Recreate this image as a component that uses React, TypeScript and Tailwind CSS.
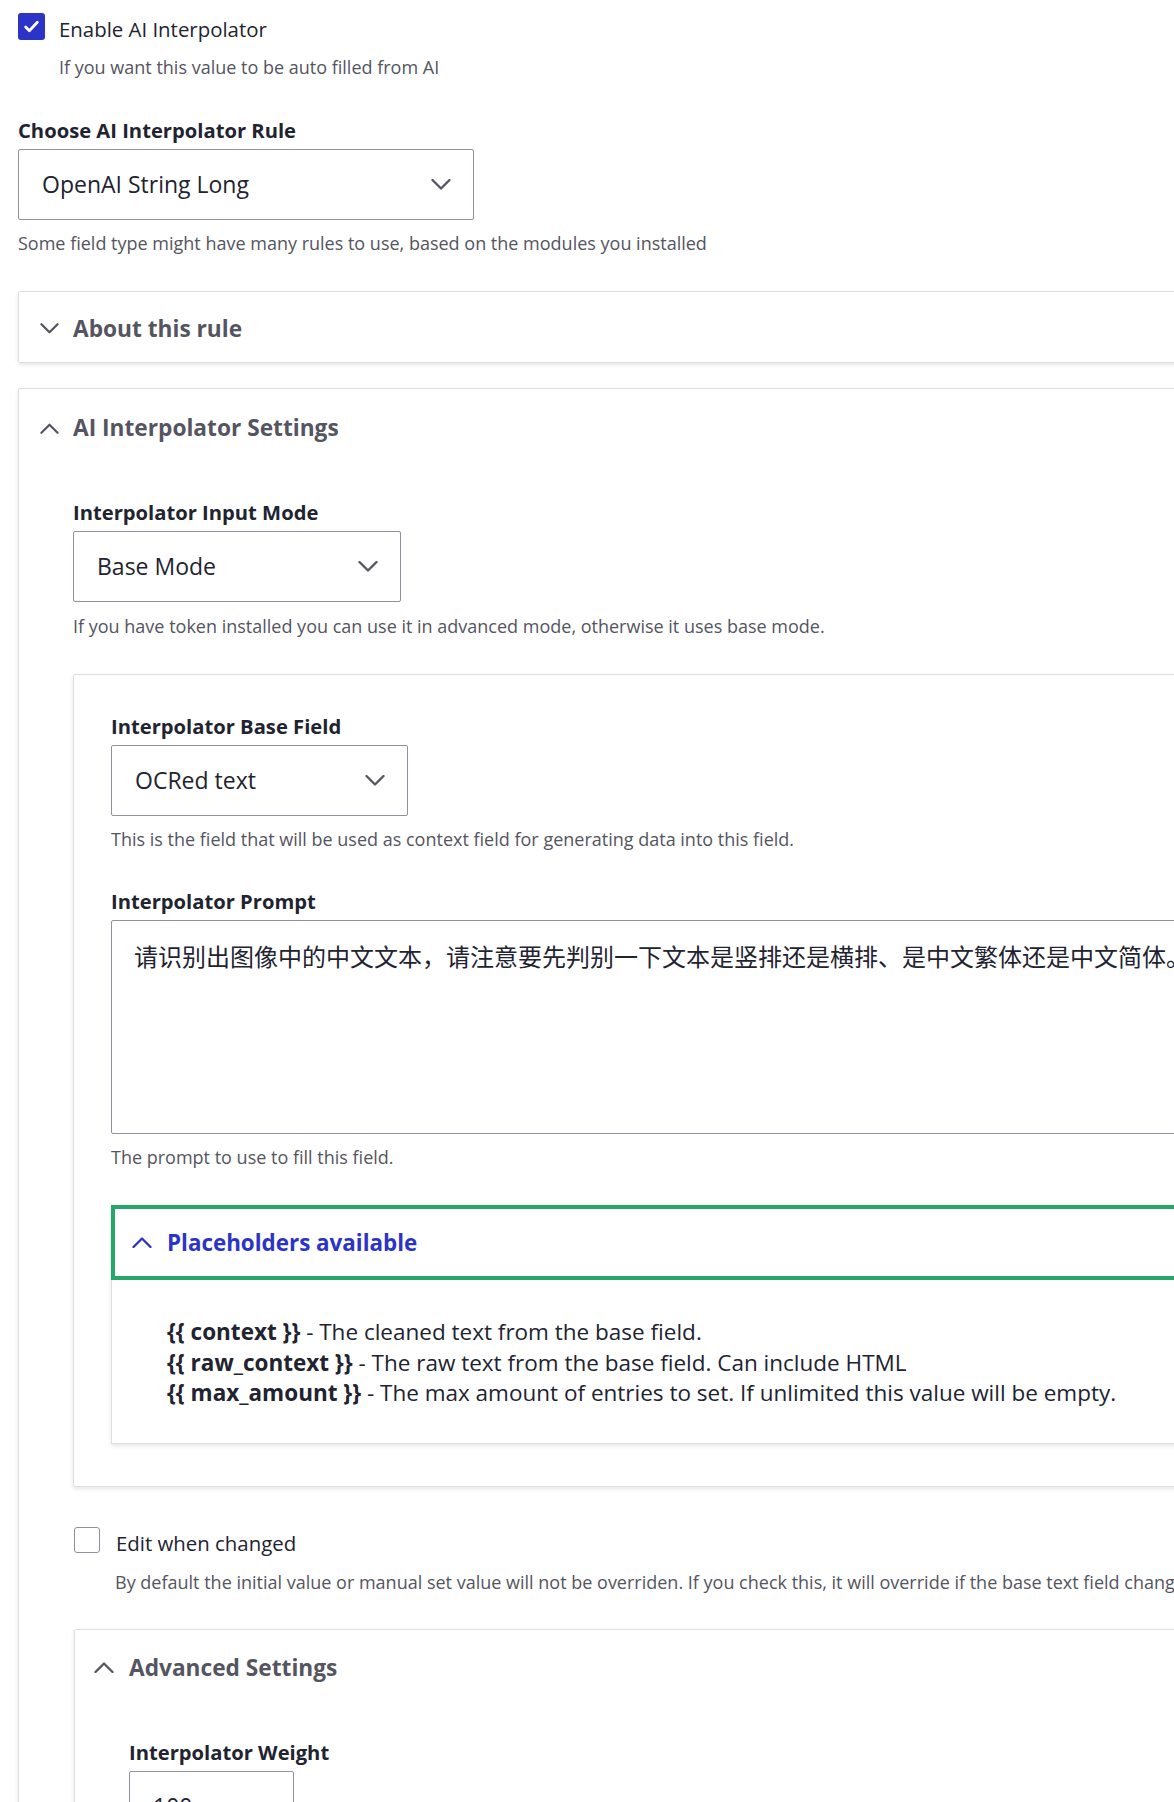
import React from "react";

const font = "font-['Open_Sans','Noto_Sans_CJK_SC',sans-serif]";

function Chevron({ up = false, className = "" }: { up?: boolean; className?: string }) {
  return (
    <svg
      viewBox="0 0 20 11"
      className={className}
      fill="none"
      stroke="currentColor"
      strokeWidth={2.3}
      strokeLinecap="round"
      strokeLinejoin="round"
    >
      {up ? <path d="M1.5 10L10 1.5 18.5 10" /> : <path d="M1.5 1L10 9.5 18.5 1" />}
    </svg>
  );
}

function Select({ value, width }: { value: string; width: string }) {
  return (
    <div
      className={`${width} h-[71px] flex items-center justify-between pl-[23px] pr-[22px] border border-[#8e929c] rounded-[2px] bg-white`}
    >
      <span className="text-[23px] text-[#222330] leading-none">{value}</span>
      <Chevron className="w-[20px] h-[11px] text-[#545560]" />
    </div>
  );
}

function Label({ children, className = "" }: { children: React.ReactNode; className?: string }) {
  return (
    <div className={`text-[20.2px] leading-[24px] font-bold text-[#222330] ${className}`}>{children}</div>
  );
}

function Desc({ children, className = "" }: { children: React.ReactNode; className?: string }) {
  return (
    <div className={`text-[18px] leading-[24px] text-[#545560] whitespace-nowrap ${className}`}>
      {children}
    </div>
  );
}

export default function App() {
  return (
    <div className={`w-full h-[1802px] overflow-hidden bg-white ${font}`}>
      <div className="w-[1480px] pl-[18px] pt-[13px]">
        {/* enable */}
        <div className="flex items-start gap-[14px]">
          <div className="w-[27px] h-[27px] rounded-[3px] bg-[#2c34c8] flex items-center justify-center">
            <svg viewBox="0 0 16 16" className="w-[17px] h-[17px]" fill="none" stroke="white" strokeWidth={2.6} strokeLinecap="round" strokeLinejoin="round">
              <path d="M2.5 8.5l3.5 3.5 7.5-8" />
            </svg>
          </div>
          <span className="text-[20.4px] leading-[32px] text-[#222330]">Enable AI Interpolator</span>
        </div>
        <Desc className="ml-[41px] mt-[10px]">If you want this value to be auto filled from AI</Desc>

        <Label className="mt-[39px]">Choose AI Interpolator Rule</Label>
        <div className="mt-[7px]">
          <Select value="OpenAI String Long" width="w-[456px]" />
        </div>
        <Desc className="mt-[11px]">Some field type might have many rules to use, based on the modules you installed</Desc>

        {/* about */}
        <div className="mt-[36px] h-[72px] border border-[#dedfe4] rounded-[2px] shadow-[0_2px_4px_rgba(0,0,0,0.1)] flex items-center pl-[21px] pt-[3px] gap-[14px]">
          <Chevron className="w-[19px] h-[11px] text-[#545560]" />
          <span className="text-[22.7px] leading-[30px] font-bold text-[#545560]">About this rule</span>
        </div>

        {/* settings */}
        <div className="mt-[25px] border border-[#dedfe4] rounded-[2px] shadow-[0_2px_4px_rgba(0,0,0,0.1)] pt-[24px] pb-[60px]">
          <div className="flex items-center pl-[21px] gap-[14px]">
            <Chevron up className="w-[19px] h-[11px] text-[#545560]" />
            <span className="text-[22.7px] leading-[30px] font-bold text-[#545560]">AI Interpolator Settings</span>
          </div>

          <div className="pl-[54px]">
            <Label className="mt-[57px]">Interpolator Input Mode</Label>
            <div className="mt-[7px]">
              <Select value="Base Mode" width="w-[328px]" />
            </div>
            <Desc className="mt-[12px]">
              If you have token installed you can use it in advanced mode, otherwise it uses base mode.
            </Desc>

            {/* base field card */}
            <div className="mt-[36px] border border-[#dedfe4] rounded-[2px] shadow-[0_2px_4px_rgba(0,0,0,0.1)] pl-[37px] pt-[39px] pb-[42px]">
              <Label>Interpolator Base Field</Label>
              <div className="mt-[7px]">
                <Select value="OCRed text" width="w-[297px]" />
              </div>
              <Desc className="mt-[11px]">
                This is the field that will be used as context field for generating data into this field.
              </Desc>

              <Label className="mt-[38px]">Interpolator Prompt</Label>
              <div className="mt-[7px] h-[214px] border border-[#8e929c] rounded-[2px] pl-[22px] pt-[19px] text-[24px] leading-[34px] text-[#222330] whitespace-nowrap">
                请识别出图像中的中文文本，请注意要先判别一下文本是竖排还是横排、是中文繁体还是中文简体。
              </div>
              <Desc className="mt-[11px]">The prompt to use to fill this field.</Desc>

              {/* placeholders */}
              <div className="mt-[36px] shadow-[0_2px_4px_rgba(0,0,0,0.1)]">
                <div className="h-[75px] border-4 border-[#26a769] flex items-center pl-[17px] gap-[15px]">
                  <Chevron up className="w-[20px] h-[11px] text-[#2c34c8]" />
                  <span className="text-[22.4px] leading-[30px] font-bold text-[#2c34c8]">Placeholders available</span>
                </div>
                <div className="border-l border-b border-[#dedfe4] pl-[55px] pt-[37px] pb-[34px] text-[22.5px] leading-[30.5px] text-[#222330] whitespace-nowrap">
                  <div>
                    <b>{"{{ context }}"}</b> - The cleaned text from the base field.
                  </div>
                  <div>
                    <b>{"{{ raw_context }}"}</b> - The raw text from the base field. Can include HTML
                  </div>
                  <div>
                    <b>{"{{ max_amount }}"}</b> - The max amount of entries to set. If unlimited this value will be empty.
                  </div>
                </div>
              </div>
            </div>

            {/* edit when changed */}
            <div className="mt-[40px] flex items-start gap-[16px] pl-[1px]">
              <div className="w-[26px] h-[26px] border border-[#8e929c] rounded-[3px] bg-white" />
              <span className="text-[20.4px] leading-[32px] text-[#222330]">Edit when changed</span>
            </div>
            <Desc className="ml-[42px] mt-[11px]">
              By default the initial value or manual set value will not be overriden. If you check this, it will override if the base text field changes.
            </Desc>

            {/* advanced */}
            <div className="mt-[35px] ml-[1px] border border-[#dedfe4] rounded-[2px] shadow-[0_2px_4px_rgba(0,0,0,0.1)] pt-[23px] pb-[60px]">
              <div className="flex items-center pl-[19px] gap-[15px]">
                <Chevron up className="w-[20px] h-[11px] text-[#545560]" />
                <span className="text-[22.7px] leading-[30px] font-bold text-[#545560]">Advanced Settings</span>
              </div>
              <div className="pl-[54px]">
                <Label className="mt-[57px]">Interpolator Weight</Label>
                <div className="mt-[7px] w-[165px] h-[71px] border border-[#8e929c] rounded-[2px] flex items-center pl-[23px] text-[23px] text-[#222330]">
                  100
                </div>
              </div>
            </div>
          </div>
        </div>
      </div>
    </div>
  );
}
